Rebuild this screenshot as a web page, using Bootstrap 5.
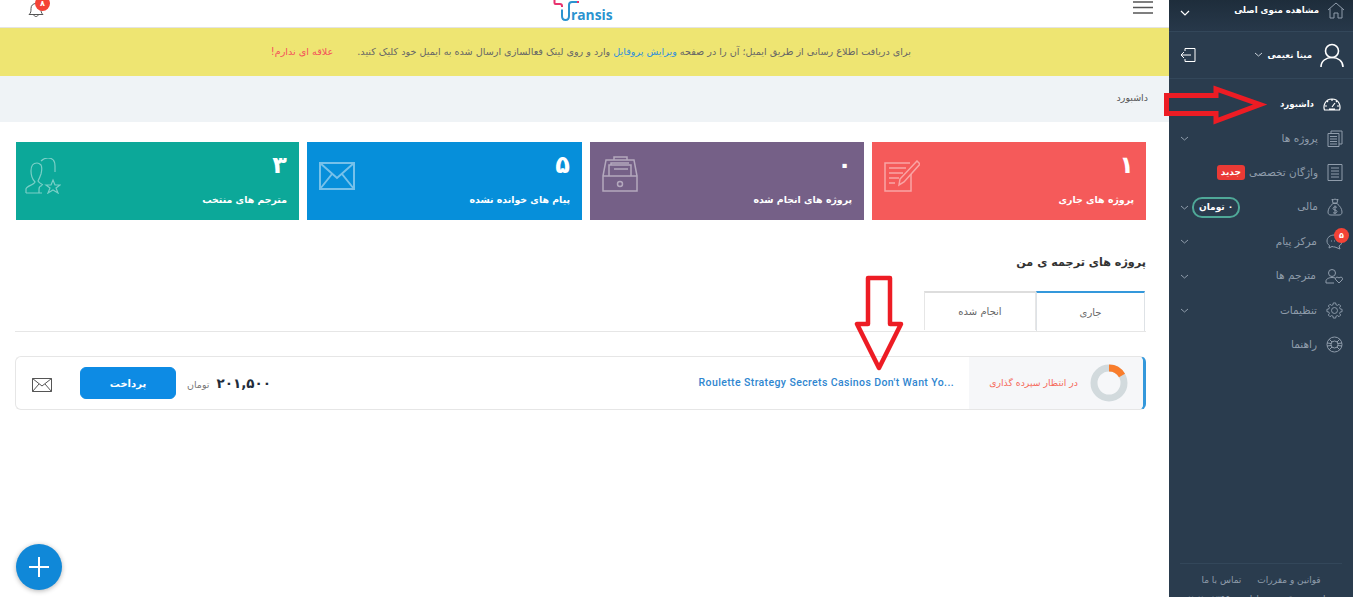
<!DOCTYPE html>
<html lang="fa">
<head>
  <meta charset="UTF-8">
  <meta name="viewport" content="width=device-width, initial-scale=1.0">
  <title>Transis</title>
  <link href="https://cdn.jsdelivr.net/npm/bootstrap@5.3.0/dist/css/bootstrap.min.css" rel="stylesheet">
  <style>
    html, body { height: 597px; overflow: hidden; }
    body { font-family: "DejaVu Sans", "Noto Sans", sans-serif; font-size: 10px; color: #555; background: #fff; }
    svg { display: block; flex: none; }
    .page-main { width: 1169px; height: 597px; }
    .top-bar { height: 28px; border-bottom: 1px solid #e4e4e4; padding: 0 16px 0 28px; }
    .bell-wrap { width: 16px; height: 17px; margin-top: 1px; }
    .count-dot { position: absolute; width: 15px; height: 15px; border-radius: 50%; background: #f44336; color: #fff; font-size: 8px; font-weight: 700; line-height: 15px; text-align: center; }
    .bell-wrap .count-dot { left: 7px; top: -5px; }
    .logo-wrap { position: absolute; left: 553px; top: 0; width: 64px; height: 24px; overflow: hidden; }
    .logo-text { position: absolute; left: 18px; top: 5px; font-family: "Open Sans", sans-serif; font-size: 15px; font-weight: 700; line-height: 18px; color: #2b93cf; transform: scaleX(.92); transform-origin: left; }
    .notice-bar { height: 48px; background: #eee572; padding-right: 258px; font-size: 9.65px; color: #666; }
    .notice-bar a { color: #2f8fdc; text-decoration: none; }
    .notice-bar .refuse-link { color: #f4505a; }
    .crumb-bar { height: 46px; background: #eff3f6; padding-right: 21px; padding-bottom: 2px; color: #555; font-size: 9.5px; }
    .content-box { padding: 20px 23px 0 15px; }
    .stat-grid { display: grid; grid-template-columns: 283px 275px 274px 274px; gap: 8px; margin-left: 1px; }
    .stat-box { height: 78px; padding: 8px 12px 0 12px; color: #fff; }
    .stat-num { font-size: 24px; font-weight: 700; line-height: 30px; }
    .stat-label { font-size: 9.4px; font-weight: 700; margin-top: 12px; line-height: 16px; }
    .stat-box svg { opacity: .45; }
    .tile-red { background: #f55a5a; }
    .tile-purple { background: #756087; }
    .tile-blue { background: #068fda; }
    .tile-teal { background: #0ca899; padding-left: 9px; }
    .icon-friends { margin-top: 8px; }
    .icon-mail { margin-top: 12px; }
    .icon-drawer { margin-top: 6px; }
    .icon-note { margin-top: 10px; }
    .block-title { font-size: 11.2px; font-weight: 700; color: #333; margin: 32px 0 17px; line-height: 22px; }
    .nav-tabs.project-tabs { --bs-nav-tabs-border-color: #e6e6e6; --bs-nav-tabs-border-radius: 0; margin-bottom: 24px; padding-right: 1px; }
    .project-tabs .nav-link { width: 112px; height: 39px; padding: 0; margin: 0; font-size: 10px; color: #666; border: 1px solid #e6e6e6; border-top: 2px solid #ddd; border-bottom: 0; display: flex; align-items: center; justify-content: center; }
    .project-tabs .nav-link.active { width: 109px; border-top-color: #3498db; color: #666; height: 40px; }
    .job-row { height: 54px; border: 1px solid #e6e6e6; border-right: 3px solid #3498db; border-radius: 6px; overflow: hidden; }
    .job-mail { width: 64px; padding-left: 16px; padding-top: 21px; }
    .job-pay { width: 96px; height: 32px; background: #0d8be4; border-color: #0d8be4; font-size: 10px; font-weight: 700; padding: 0; }
    .job-price { margin-left: 11px; gap: 7px; }
    .job-price b { font-size: 13.5px; letter-spacing: -.5px; color: #222c3a; }
    .job-price span { font-size: 9.5px; color: #777; margin-top: 4px; }
    .job-title { font-family: Roboto, sans-serif; font-size: 10.5px; font-weight: 500; letter-spacing: .39px; color: #2f86d0; padding-right: 15px; white-space: nowrap; }
    .job-state { width: 174px; background: #f6f7f9; padding: 0 15px 0 0; color: #f5695a; font-size: 9.3px; gap: 12px; }
    .fab-btn { position: fixed; left: 16px; bottom: 7px; width: 46px; height: 46px; border-radius: 50%; background: #1088d8; box-shadow: 0 1px 5px rgba(0,0,0,.3); }
    .side-panel { width: 184px; height: 597px; background: #2a3c4e; color: #8f9cab; font-size: 10.5px; overflow: hidden; }
    .side-home { height: 32px; background: linear-gradient(#1e2d3b, #27384a); padding: 0 8px 11px 11px; color: #fff; font-weight: 700; font-size: 8.6px; border-bottom: 1px solid #33475a; }
    .side-user { height: 47px; padding: 0 9px 0 11px; color: #fff; font-weight: 700; font-size: 8.6px; border-bottom: 1px solid #33475a; }
    .side-menu { padding-top: 8px; }
    .side-item { height: 34.4px; padding: 0 10px 0 11px; color: #8f9cab; position: relative; }
    .side-item.current { color: #fff; font-weight: 700; font-size: 8.6px; padding-right: 12px; }
    .side-item svg.menu-icon { margin-left: 9px; }
    .item-label { margin-left: auto; }
    .pill-new { background: #ea3a35; color: #fff; font-size: 9px; font-weight: 700; padding: 1px 4px; border-radius: 3px; line-height: 13px; }
    .pill-money { border: 2px solid #4fa898; color: #fff; font-size: 9px; font-weight: 700; border-radius: 10px; height: 21px; line-height: 17px; padding: 0 5px; margin-left: 3px; }
    .side-item .count-dot { right: 4px; top: 3px; }
    .side-foot { margin: auto 11px 0; border-top: 1px solid #33475a; height: 34px; padding-top: 10px; font-size: 9px; color: #8f9cab; }
    .side-foot div { white-space: nowrap; }
    .copy-line { margin-top: 5px; }
    .mark-arrow { position: absolute; pointer-events: none; }
  </style>
</head>
<body class="d-flex">

<main class="page-main d-flex flex-column position-relative">
  <header class="top-bar d-flex justify-content-between align-items-start">
    <div class="bell-wrap position-relative">
      <svg width="16" height="17" viewBox="0 0 16 17" fill="none" stroke="#555" stroke-width="1"><path d="M1 13.5c2-1.5 2-3.5 2-6 0-3 2-5 5-5s5 2 5 5c0 2.500 0 4.500 2 6zM6 14c0 2 4 2 4 0"/></svg>
      <span class="count-dot">۸</span>
    </div>
    <div class="logo-wrap">
      <svg width="30" height="24" viewBox="0 0 30 24" fill="none"><path d="M1.500 -1V3q0 1 1 1H7q2 0 2 2v1" stroke="#e8326e" stroke-width="2"/><path d="M9 9.500V16q0 4 3.500 4t3.500-4V5q0-3 3-3h5" stroke="#2b93cf" stroke-width="2"/><path d="M24 2h2" stroke="#e8326e" stroke-width="2"/></svg>
      <span class="logo-text">ransis</span>
    </div>
    <svg width="20" height="15" viewBox="0 0 20 15" stroke="#555" stroke-width="1.500"><path d="M0 2h20M0 7.500h20M0 13h20"/></svg>
  </header>

  <div class="notice-bar d-flex align-items-center justify-content-end">
    <a href="#" class="refuse-link me-4" dir="rtl">علاقه ای ندارم!</a>
    <span dir="rtl">برای دریافت اطلاع رسانی از طریق ایمیل؛ آن را در صفحه <a href="#">ویرایش پروفایل</a> وارد و روی لینک فعالسازی ارسال شده به ایمیل خود کلیک کنید.</span>
  </div>

  <div class="crumb-bar d-flex align-items-center justify-content-end"><span dir="rtl">داشبورد</span></div>

  <div class="content-box">
    <div class="stat-grid">
      <div class="stat-box tile-teal d-flex justify-content-between">
        <svg class="icon-friends" width="36" height="36" viewBox="0 0 36 36" fill="none" stroke="#fff" stroke-width="1.200"><path d="M1 35V31c0-3 8-4 9-7-3-3-4-6-4-11 0-5 2-8 6-8 2 0 3 1 4 2 1 2 1 5 0 9-1 3-2 5-3 7 1 2 3 3 5 4M1 35H17M14 35V31c0-2 1-3 3-3.500M16 3c2-2 4-3 7-3 5 0 7 3 7 8v6"/><path d="M28 22l2 5h5l-4 3 2 5-5-3-5 3 2-5-4-3h5z"/></svg>
        <div class="text-end"><div class="stat-num">۳</div><div class="stat-label" dir="rtl">مترجم های منتخب</div></div>
      </div>
      <div class="stat-box tile-blue d-flex justify-content-between">
        <svg class="icon-mail" width="36" height="28" viewBox="0 0 36 28" fill="none" stroke="#fff" stroke-width="2"><path d="M1 1h34v26H1zM1 1l17 15L35 1M1 27l12-15M35 27L23 12"/></svg>
        <div class="text-end"><div class="stat-num">۵</div><div class="stat-label" dir="rtl">پیام های خوانده نشده</div></div>
      </div>
      <div class="stat-box tile-purple d-flex justify-content-between">
        <svg class="icon-drawer" width="36" height="36" viewBox="0 0 36 36" fill="none" stroke="#fff" stroke-width="1.500"><path d="M1 20V35H35V20zM1 20L4 4H32L35 20M12 4V1H25V4M7 20V9H29V20M9 9V7H27"/><circle cx="18" cy="28" r="2.500"/><path d="M12 13H26"/></svg>
        <div class="text-end"><div class="stat-num">۰</div><div class="stat-label" dir="rtl">پروژه های انجام شده</div></div>
      </div>
      <div class="stat-box tile-red d-flex justify-content-between">
        <svg class="icon-note" width="36" height="32" viewBox="0 0 36 32" fill="none" stroke="#fff" stroke-width="1.500"><path d="M26 3H1v28h26V14M5 8h17M5 13h14M5 18h10M5 23h6"/><path d="M33 1l3 3-16 18-5 3 1-6z"/></svg>
        <div class="text-end"><div class="stat-num">۱</div><div class="stat-label" dir="rtl">پروژه های جاری</div></div>
      </div>
    </div>

    <h2 class="block-title text-end" dir="rtl">پروژه های ترجمه ی من</h2>

    <ul class="nav nav-tabs project-tabs justify-content-end">
      <li class="nav-item"><a class="nav-link" href="#" dir="rtl">انجام شده</a></li>
      <li class="nav-item"><a class="nav-link active" href="#" dir="rtl">جاری</a></li>
    </ul>

    <div class="job-row d-flex align-items-center">
      <div class="job-mail h-100">
        <svg width="20" height="14" viewBox="0 0 20 14" fill="none" stroke="#555" stroke-width="1"><path d="M.5.500h19v13H.5zM.5.500L10 8 19.500.500M.5 13.500L7 6M19.500 13.500L13 6"/></svg>
      </div>
      <button type="button" class="btn btn-primary job-pay" dir="rtl">پرداخت</button>
      <div class="job-price d-flex align-items-center">
        <span dir="rtl">تومان</span><b>۲۰۱,۵۰۰</b>
      </div>
      <a href="#" class="job-title ms-auto text-decoration-none">Roulette Strategy Secrets Casinos Don't Want Yo...</a>
      <div class="job-state h-100 d-flex align-items-center justify-content-end">
        <span dir="rtl">در انتظار سپرده گذاری</span>
        <svg width="38" height="38" viewBox="0 0 38 38" fill="none" stroke-width="7"><circle cx="19" cy="19" r="15" stroke="#d2dadd"/><path d="M19 4A15 15 0 0 1 32 11.500" stroke="#f97d2c"/></svg>
      </div>
    </div>
  </div>

  <button type="button" class="btn fab-btn d-flex align-items-center justify-content-center p-0" aria-label="add">
    <svg width="20" height="20" viewBox="0 0 20 20" stroke="#fff" stroke-width="2"><path d="M10 0v20M0 10h20"/></svg>
  </button>
</main>

<aside class="side-panel d-flex flex-column">
  <div class="side-home d-flex align-items-center">
    <svg width="10" height="6" viewBox="0 0 10 6" fill="none" stroke="#fff" stroke-width="1.200" style="margin-top:6px"><path d="M1 1l4 4 4-4"/></svg>
    <span class="item-label" dir="rtl">مشاهده منوی اصلی</span>
    <svg width="18" height="17" viewBox="0 0 18 17" fill="none" stroke="#8f9cab" stroke-width="1" class="ms-2"><path d="M1 8L9 1l8 7M3 6.500V16h4v-5h4v5h4V6.500"/></svg>
  </div>

  <div class="side-user d-flex align-items-center">
    <svg width="16" height="16" viewBox="0 0 16 16" fill="none" stroke="#fff" stroke-width="1"><path d="M5 1.500h10v13H5M5 1.500V4M5 14.500V12M1 8h10M1 8l3-3M1 8l3 3"/></svg>
    <span class="item-label d-flex align-items-center gap-1">
      <svg width="9" height="5" viewBox="0 0 9 5" fill="none" stroke="#c9d1d9" stroke-width="1"><path d="M1 1l3.500 3L8 1"/></svg>
      <span dir="rtl">مینا نعیمی</span>
    </span>
    <svg width="24" height="24" viewBox="0 0 24 24" fill="none" stroke="#fff" stroke-width="1.600" class="ms-2"><circle cx="12" cy="8" r="6.500"/><path d="M1 24c0-6 5-9.500 11-9.500S23 18 23 24"/></svg>
  </div>

  <nav class="side-menu">
    <div class="side-item current d-flex align-items-center">
      <span class="item-label" dir="rtl">داشبورد</span>
      <svg class="menu-icon" width="18" height="14" viewBox="0 0 18 14" fill="none" stroke="#fff" stroke-width="1.200"><path d="M1.500 13C0 9 2 2 9 2s9 7 7.500 11zM9 2v2M4 4l1 1M14 4l-1 1M2 9h2M14 9h2M6 12h6M9 10l3-4"/></svg>
    </div>
    <div class="side-item d-flex align-items-center">
      <svg width="9" height="5" viewBox="0 0 9 5" fill="none" stroke="#8f9cab" stroke-width="1"><path d="M1 1l3.500 3L8 1"/></svg>
      <span class="item-label" dir="rtl">پروژه ها</span>
      <svg class="menu-icon" width="16" height="17" viewBox="0 0 16 17" fill="none" stroke="#8f9cab" stroke-width="1"><path d="M1 3.500h11v13H1zM4 3.500V1h11v13h-3M3 6.500h7M3 9h7M3 11.500h7M3 14h7"/></svg>
    </div>
    <div class="side-item d-flex align-items-center">
      <span class="item-label d-flex align-items-center gap-1">
        <span class="pill-new" dir="rtl">جدید</span>
        <span dir="rtl">واژگان تخصصی</span>
      </span>
      <svg class="menu-icon" width="16" height="17" viewBox="0 0 16 17" fill="none" stroke="#8f9cab" stroke-width="1"><path d="M1 .500h14v16H1zM4 4h8M4 7h8M4 10h8M4 13h8"/></svg>
    </div>
    <div class="side-item d-flex align-items-center">
      <svg width="9" height="5" viewBox="0 0 9 5" fill="none" stroke="#8f9cab" stroke-width="1"><path d="M1 1l3.500 3L8 1"/></svg>
      <span class="pill-money" dir="rtl">۰ تومان</span>
      <span class="item-label" dir="rtl">مالی</span>
      <svg class="menu-icon" width="16" height="18" viewBox="0 0 16 18" fill="none" stroke="#8f9cab" stroke-width="1"><path d="M5 1l1 1 2-1 2 1 1-1-1 4H6zM6 5.500C3 8 1 11 1 14c0 2 1 3 3 3h8c2 0 3-1 3-3 0-3-2-6-5-8.500z"/><path d="M10 9.500C9.500 8.500 6 8.500 6 10.500s4 1 4 3-3.500 2-4 1M8 7.500v8.500"/></svg>
    </div>
    <div class="side-item d-flex align-items-center">
      <svg width="9" height="5" viewBox="0 0 9 5" fill="none" stroke="#8f9cab" stroke-width="1"><path d="M1 1l3.500 3L8 1"/></svg>
      <span class="item-label" dir="rtl">مرکز پیام</span>
      <svg class="menu-icon" width="17" height="16" viewBox="0 0 17 16" fill="none" stroke="#8f9cab" stroke-width="1"><path d="M8.500 1C4 1 1 3.500 1 7c0 2 1 3.500 2.500 4.500L3 14l3-1.500c1 .300 2 .500 3 .500l5 2-1-3c2-1 3-3 3-5 0-3.500-3-6.500-7.500-6.500z"/><path d="M5 7h1M8 7h1M11 7h1"/></svg>
      <span class="count-dot" dir="rtl">۵</span>
    </div>
    <div class="side-item d-flex align-items-center">
      <svg width="9" height="5" viewBox="0 0 9 5" fill="none" stroke="#8f9cab" stroke-width="1"><path d="M1 1l3.500 3L8 1"/></svg>
      <span class="item-label" dir="rtl">مترجم ها</span>
      <svg class="menu-icon" width="18" height="15" viewBox="0 0 18 15" fill="none" stroke="#8f9cab" stroke-width="1"><circle cx="7" cy="4" r="3.500"/><path d="M9 14H1v-2c0-2 3-3.500 6-3.500 1.500 0 2.500.200 3.500.700"/><path d="M14 14l-3-3c-2-2 1-4 3-2 2-2 5 0 3 2z"/></svg>
    </div>
    <div class="side-item d-flex align-items-center">
      <svg width="9" height="5" viewBox="0 0 9 5" fill="none" stroke="#8f9cab" stroke-width="1"><path d="M1 1l3.500 3L8 1"/></svg>
      <span class="item-label" dir="rtl">تنظیمات</span>
      <svg class="menu-icon" width="17" height="17" viewBox="0 0 20 20" fill="none" stroke="#8f9cab" stroke-width="1.100"><path d="M8.300 3.200L8.600 1.100H11.400L11.700 3.200L13.600 4L15.300 2.700L17.300 4.700L16 6.400L16.800 8.300L18.900 8.600V11.400L16.800 11.700L16 13.600L17.300 15.300L15.300 17.300L13.600 16L11.700 16.800L11.400 18.900H8.600L8.300 16.800L6.400 16L4.700 17.300L2.700 15.300L4 13.600L3.200 11.700L1.100 11.400V8.600L3.200 8.300L4 6.400L2.700 4.700L4.700 2.700L6.400 4z"/><circle cx="10" cy="10" r="3.500"/></svg>
    </div>
    <div class="side-item d-flex align-items-center">
      <span class="item-label" dir="rtl">راهنما</span>
      <svg class="menu-icon" width="17" height="17" viewBox="0 0 17 17" fill="none" stroke="#8f9cab" stroke-width="1"><circle cx="8.500" cy="8.500" r="7.500"/><circle cx="8.500" cy="8.500" r="3.500"/><path d="M3.200 3.200l2.800 2.800M13.800 3.200L11 6M3.200 13.800L6 11M13.800 13.800L11 11M1 7l4 .500M16 7l-4 .500M1 10l4-.500M16 10l-4-.500"/></svg>
    </div>
  </nav>

  <footer class="side-foot">
    <div class="d-flex justify-content-center gap-3" dir="rtl">
      <span>قوانین و مقررات</span><span>تماس با ما</span>
    </div>
    <div class="copy-line text-center" dir="rtl">تمامی حقوق محفوظ است ۱۳۹۹-۲۰۲۰</div>
  </footer>
</aside>

<svg class="mark-arrow" style="left:1161px;top:83px" width="110" height="44" viewBox="0 0 110 44" fill="none" stroke="#ed1c24" stroke-width="5"><path d="M5.500 12.500H55V6L99 21.500 55 38V30.500H5.500z"/></svg>
<svg class="mark-arrow" style="left:854px;top:274px" width="52" height="100" viewBox="0 0 52 100" fill="none" stroke="#ed1c24" stroke-width="4.500" stroke-linejoin="round"><path d="M14 4H36V50H47L25 94 3 50H14z"/></svg>

<script src="https://cdn.jsdelivr.net/npm/bootstrap@5.3.0/dist/js/bootstrap.bundle.min.js"></script>
</body>
</html>
